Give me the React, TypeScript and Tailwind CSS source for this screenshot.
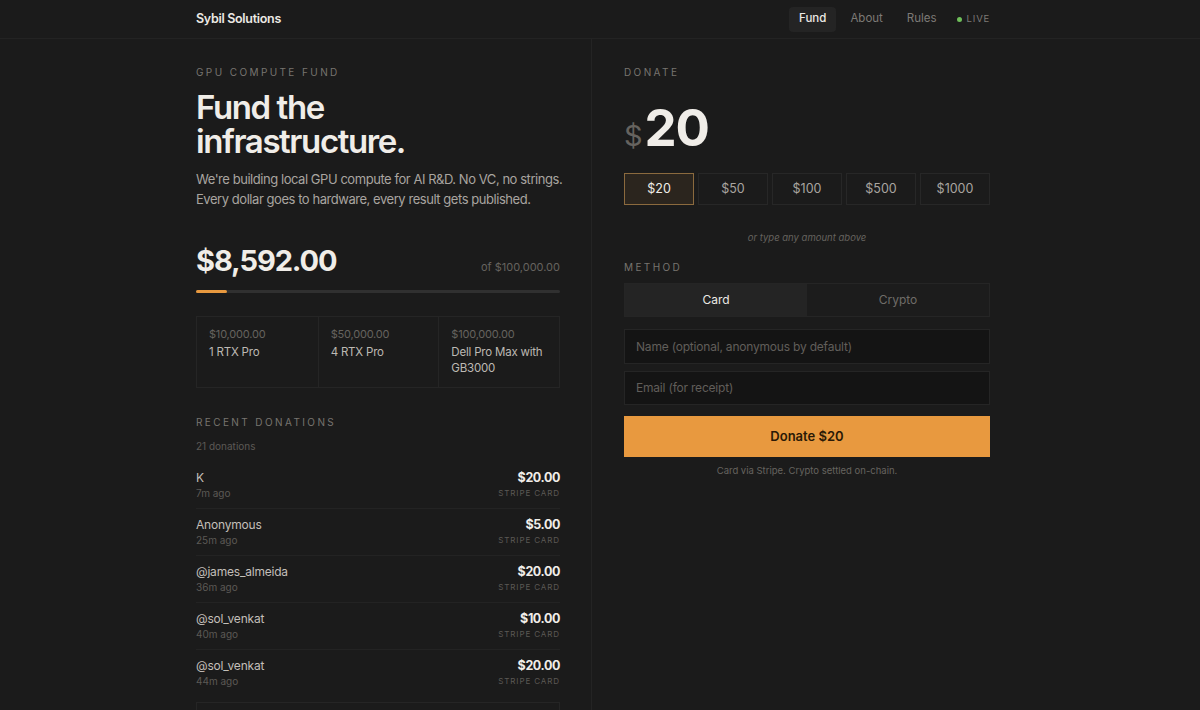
import React from 'react';

const tiers = [
  { amount: '$10,000.00', label: '1 RTX Pro' },
  { amount: '$50,000.00', label: '4 RTX Pro' },
  { amount: '$100,000.00', label: 'Dell Pro Max with GB3000' },
];

const donations = [
  { name: 'K', ago: '7m ago', amount: '$20.00' },
  { name: 'Anonymous', ago: '25m ago', amount: '$5.00' },
  { name: '@james_almeida', ago: '36m ago', amount: '$20.00' },
  { name: '@sol_venkat', ago: '40m ago', amount: '$10.00' },
  { name: '@sol_venkat', ago: '44m ago', amount: '$20.00' },
];

const presets = ['$20', '$50', '$100', '$500', '$1000'];

export default function App() {
  return (
    <div
      className="bg-[#1b1b1b] text-[#ece9e4] overflow-hidden h-[710px]"
      style={{ fontFamily: 'Inter, "Liberation Sans", sans-serif' }}
    >
      {/* top nav */}
      <header className="border-b border-[#232323]">
        <div className="ml-[196px] w-[794px] h-[38px] flex items-center justify-between">
          <div className="text-[12.5px] font-semibold text-[#ece9e4] tracking-[-0.3px]">Sybil Solutions</div>
          <nav className="flex items-center text-[11.5px]">
            <span className="h-[25px] flex items-center px-[10px] rounded-[4px] bg-[#242424] text-[#ece9e4] font-medium">Fund</span>
            <span className="ml-[14px] text-[#7d7a76]">About</span>
            <span className="ml-[24px] text-[#7d7a76]">Rules</span>
            <span className="ml-[20px] flex items-center gap-[5px] text-[9.5px] tracking-[0.8px] text-[#7d7a76]">
              <span className="w-[5px] h-[5px] rounded-full bg-[#6fbf5a]" />
              LIVE
            </span>
          </nav>
        </div>
      </header>

      <main className="ml-[196px] w-[794px] flex">
        {/* left column */}
        <section className="w-[396px] pr-[31px] pt-[26px] border-r border-[#242424] min-h-[672px]">
          <div className="text-[10px] leading-[15px] tracking-[2.4px] text-[#77746f]">GPU COMPUTE FUND</div>
          <h1 className="mt-[10px] text-[33px] leading-[34px] font-semibold tracking-[-1.4px] text-[#f0ede8]">
            Fund the
            <br />
            infrastructure.
          </h1>
          <p className="mt-[11px] text-[13px] leading-[20px] tracking-[-0.45px] text-[#a9a5a0] whitespace-nowrap">
            We're building local GPU compute for AI R&amp;D. No VC, no strings.
            <br />
            Every dollar goes to hardware, every result gets published.
          </p>

          <div className="mt-[32px] h-[40px] flex items-center justify-between">
            <div className="text-[29px] leading-[40px] font-bold tracking-[-1.1px] text-[#f0ede8]">$8,592.00</div>
            <div className="text-[11px] text-[#66635f] mt-[12px]">of $100,000.00</div>
          </div>
          <div className="mt-[9px] h-[3px] rounded-full bg-[#303030]">
            <div className="h-[3px] rounded-full bg-[#e8993f]" style={{ width: '8.59%' }} />
          </div>

          <div className="mt-[23px] grid grid-cols-3 border border-[#252525]">
            {tiers.map((t, i) => (
              <div key={t.amount} className={`h-[70px] px-[12px] pt-[9px] ${i > 0 ? 'border-l border-[#252525]' : ''}`}>
                <div className="text-[11px] leading-[16px] tracking-[-0.2px] text-[#66635f]">{t.amount}</div>
                <div className="mt-[2px] text-[11.5px] leading-[16px] tracking-[-0.2px] text-[#bdb9b3]">{t.label}</div>
              </div>
            ))}
          </div>

          <div className="mt-[27px] text-[10px] leading-[15px] tracking-[2.4px] text-[#77746f]">RECENT DONATIONS</div>
          <div className="mt-[9px] text-[10px] leading-[15px] text-[#5c5955]">21 donations</div>

          <div className="mt-[8px]">
            {donations.map((d, i) => (
              <div
                key={i}
                className={`flex justify-between items-start pt-[8px] pb-[7px] ${i < donations.length - 1 ? 'border-b border-[#232323]' : ''}`}
              >
                <div>
                  <div className="text-[12px] leading-[16px] tracking-[-0.2px] text-[#c3bfb9]">{d.name}</div>
                  <div className="text-[10px] leading-[15px] text-[#5c5955]">{d.ago}</div>
                </div>
                <div className="text-right">
                  <div className="text-[12.5px] leading-[16px] font-bold tracking-[-0.4px] text-[#f0ede8]">{d.amount}</div>
                  <div className="text-[8px] leading-[15px] tracking-[0.9px] text-[#5c5955]">STRIPE CARD</div>
                </div>
              </div>
            ))}
          </div>
          <div className="mt-[6px] h-[40px] border border-[#252525]" />
        </section>

        {/* right column */}
        <section className="flex-1 pl-[32px] pt-[26px]">
          <div className="text-[10px] leading-[15px] tracking-[2.4px] text-[#77746f]">DONATE</div>
          <div className="mt-[22px] flex items-end h-[52px]">
            <span className="text-[29px] leading-[30px] text-[#66635f] mr-[2px] mb-[3px]">$</span>
            <span className="text-[51px] leading-[52px] font-bold tracking-[-1.2px] text-[#f0ede8]">20</span>
          </div>

          <div className="mt-[19px] grid grid-cols-5 gap-[4px]">
            {presets.map((p, i) => (
              <div
                key={p}
                className={`h-[32px] flex items-center justify-center text-[12.5px] border ${
                  i === 0
                    ? 'border-[#8b6a3e] bg-[#2b251e] text-[#f0ede8]'
                    : 'border-[#272727] bg-[#1b1b1b] text-[#a9a5a0]'
                }`}
              >
                {p}
              </div>
            ))}
          </div>

          <div className="mt-[26px] text-center text-[9.5px] leading-[14px] italic text-[#66635f]">or type any amount above</div>

          <div className="mt-[15px] text-[10px] leading-[15px] tracking-[2.4px] text-[#77746f]">METHOD</div>
          <div className="mt-[8px] grid grid-cols-2 border border-[#252525] h-[34px]">
            <div className="flex items-center justify-center bg-[#242424] text-[12px] text-[#ece9e4]">Card</div>
            <div className="flex items-center justify-center bg-[#1c1c1c] text-[12px] text-[#6f6c68]">Crypto</div>
          </div>

          <div className="mt-[12px] h-[35px] px-[11px] flex items-center bg-[#141414] border border-[#252525] text-[12px] tracking-[-0.2px] text-[#615e5a]">
            Name (optional, anonymous by default)
          </div>
          <div className="mt-[7px] h-[34px] px-[11px] flex items-center bg-[#141414] border border-[#252525] text-[12px] tracking-[-0.2px] text-[#615e5a]">
            Email (for receipt)
          </div>

          <div className="mt-[11px] h-[41px] flex items-center justify-center bg-[#e8993f] text-[13px] font-semibold text-[#2a1906]">
            Donate $20
          </div>
          <div className="mt-[7px] text-center text-[9.5px] leading-[14px] text-[#66635f]">Card via Stripe. Crypto settled on-chain.</div>
        </section>
      </main>
    </div>
  );
}
